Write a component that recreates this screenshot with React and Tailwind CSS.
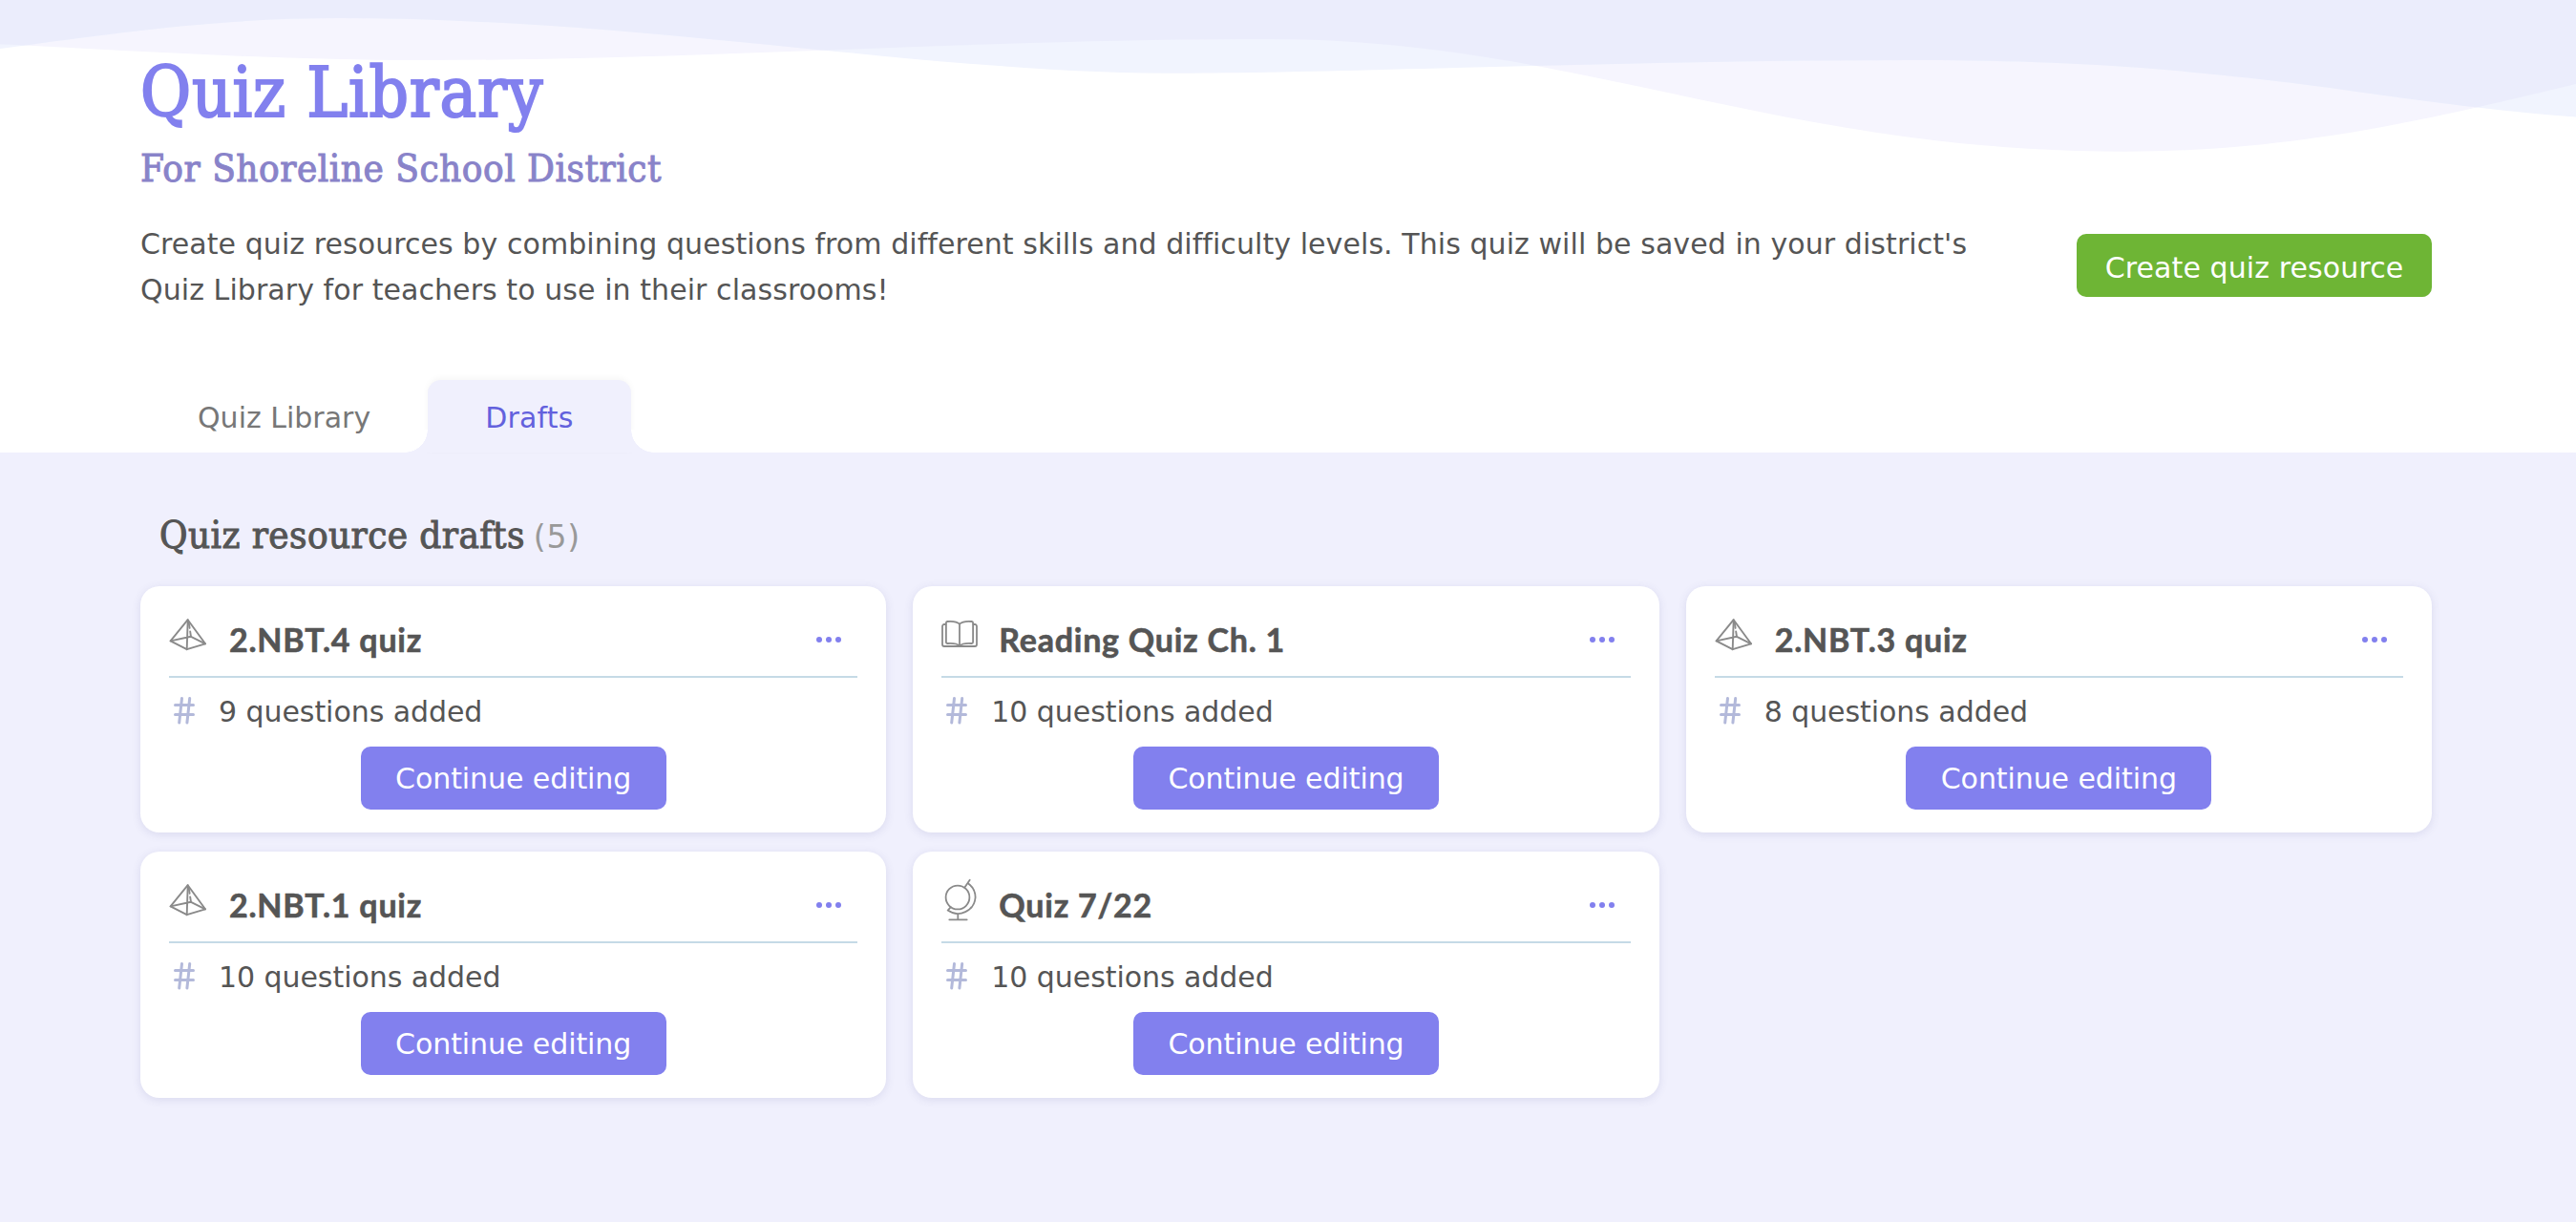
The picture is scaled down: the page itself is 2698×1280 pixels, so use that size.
import React from "react";

const DRAFTS = [
  { title: "2.NBT.4 quiz", subject: "math", questions: 9 },
  { title: "Reading Quiz Ch. 1", subject: "reading", questions: 10 },
  { title: "2.NBT.3 quiz", subject: "math", questions: 8 },
  { title: "2.NBT.1 quiz", subject: "math", questions: 10 },
  { title: "Quiz 7/22", subject: "social", questions: 10 },
];

const PyramidIcon = () => (
  <svg
    className="mt-[34px] h-[34px] w-10 shrink-0 stroke-[#8a8a8a] stroke-[1.9]"
    viewBox="0 0 40 34"
    fill="none"
    strokeLinecap="round"
    strokeLinejoin="round"
  >
    <path d="M19.7 1.2 1.6 23.4 18.7 32.2 38 26.3Z" />
    <path d="M19.7 1.2 18.7 32.2M1.6 23.4 23 18.8 38 26.3" />
    <path d="M20.7 4 23 18.8" strokeDasharray="6 3.5" />
  </svg>
);

const BookIcon = () => (
  <svg
    className="mt-[34px] h-8 w-[37px] shrink-0 overflow-visible stroke-[#8a8a8a] stroke-[1.8]"
    viewBox="0 0 37 32"
    fill="none"
    strokeLinecap="round"
    strokeLinejoin="round"
  >
    <path d="M4.5 6H3A2 2 0 0 0 1 8V27A2 2 0 0 0 3 29H35A2 2 0 0 0 37 27V8A2 2 0 0 0 35 6H33.5" />
    <path d="M19 5.6C16 2.8 11 2.6 6.2 3A1.4 1.4 0 0 0 4.9 4.4V24.6A1.4 1.4 0 0 0 6.3 26C11 25.7 16 25.5 19 28.6C22 25.5 27 25.7 31.7 26A1.4 1.4 0 0 0 33.1 24.6V4.4A1.4 1.4 0 0 0 31.8 3C27 2.6 22 2.8 19 5.6ZV29" />
  </svg>
);

const GlobeIcon = () => (
  <svg
    className="mt-[25px] h-12 w-[37px] shrink-0 overflow-visible stroke-[#8a8a8a] stroke-[1.8]"
    viewBox="0 0 37 48"
    fill="none"
    strokeLinecap="round"
    strokeLinejoin="round"
  >
    <circle cx="17" cy="23" r="12.4" />
    <path d="M24.4 12.6 29.7 4.7" />
    <path d="M27.8 8.2A18.4 18.4 0 0 1 35.6 23A18.4 18.4 0 0 1 6.7 36.6L9.8 33.2" />
    <path d="M17.3 41V46.3M8.3 46.3H26.7" />
  </svg>
);

const SUBJECT_ICONS = {
  math: PyramidIcon,
  reading: BookIcon,
  social: GlobeIcon,
};

const HashIcon = () => (
  <svg
    className="-mt-1 ml-[5px] h-[30px] w-6 shrink-0 stroke-[#b3b9da] stroke-3"
    viewBox="0 0 24 30"
    fill="none"
    strokeLinecap="round"
  >
    <path d="M1.5 9.5H20.5M1.5 19.5H20.5M8.5 2.5 5.7 28M16.7 2.5 13.9 28" />
  </svg>
);

const DotsIcon = () => (
  <svg className="h-2 w-[26px] fill-[#8280ee]" viewBox="0 0 26 8">
    <circle cx="3" cy="4" r="3" />
    <circle cx="13" cy="4" r="3" />
    <circle cx="23" cy="4" r="3" />
  </svg>
);

const LILAC_WAVE =
  "M0 46.3C150 54 300 63 440 63C740 63 1010 41 1330 41C1650 41 1856 158.7 2226 158.7C2406 158.7 2548 124 2698 88V0H0Z";
const BLUE_WAVE =
  "M0 51C130 33 235 19 355 19C675 19 970 76.7 1225 76.7C1405 76.7 1702 63 2002 63C2170 63 2300 73 2440 92C2530 104.5 2610 116 2698 122.5V0H0Z";

const Waves = () => (
  <svg className="absolute inset-x-0 top-0 h-40 w-full" viewBox="0 0 2698 160" preserveAspectRatio="none">
    <clipPath id="lilac-wave">
      <path d={LILAC_WAVE} />
    </clipPath>
    <path d={LILAC_WAVE} fill="#f6f5fe" />
    <path d={BLUE_WAVE} fill="#f1f4fe" />
    <path d={BLUE_WAVE} fill="#ebedfc" clipPath="url(#lilac-wave)" />
  </svg>
);

const Tabs = () => (
  <div className="mt-[70px] flex h-[76px] text-[30px] leading-9">
    <button className="flex pt-[22px] pr-[60px] pl-[60px] text-[#777777]">Quiz Library</button>
    <button className="relative flex rounded-t-[14px] bg-[#f0f0fd] pt-[22px] pr-[60px] pl-[60px] tracking-[0.2px] text-[#6361dd] shadow-[0_-2px_6px_rgba(0,0,0,0.04)]">
      <span className="absolute bottom-0 -left-6 size-6 bg-[radial-gradient(circle_at_0_0,#ffffff_23.5px,#f0f0fd_24px)]" />
      Drafts
      <span className="absolute -right-6 bottom-0 size-6 bg-[radial-gradient(circle_at_100%_0,#ffffff_23.5px,#f0f0fd_24px)]" />
    </button>
  </div>
);

const DraftCard = ({ title, subject, questions }) => {
  const Icon = SUBJECT_ICONS[subject];

  return (
    <div className="flex flex-col rounded-[20px] bg-white px-[30px] pb-6 shadow-[0_2px_10px_rgba(70,70,140,0.13)]">
      <div className="flex h-24 items-start border-b-2 border-[#c5dae6]">
        <Icon />
        <h3 className="mt-[35px] ml-[23px] font-[Lato,sans-serif] text-[34px] leading-[42px] font-bold tracking-[0.75px] [-webkit-text-stroke:0.6px_#555555]">
          {title}
        </h3>
        <button className="mt-[52px] mr-[17px] ml-auto">
          <DotsIcon />
        </button>
      </div>
      <div className="mt-[18px] flex h-9 items-center gap-[23px] text-[30px] leading-9 tracking-[-0.06px]">
        <HashIcon />
        <span>{questions} questions added</span>
      </div>
      <button className="mt-[18px] h-[66px] w-80 self-center rounded-[10px] bg-[#8280ee] pt-px text-[30px] tracking-[-0.08px] text-white">
        Continue editing
      </button>
    </div>
  );
};

const App = () => (
  <div className="min-h-screen bg-[#f0f0fd] font-['DejaVu_Sans',Verdana,sans-serif] text-[#555555]">
    <header className="relative h-[474px] bg-white">
      <Waves />
      <div className="relative pt-[55px] pr-[151px] pl-[147px]">
        <h1 className="font-['DejaVu_Serif_Condensed','DejaVu_Serif',serif] text-[72px] leading-[84px] tracking-[0.8px] text-[#8280ee] [-webkit-text-stroke:2px_#8280ee]">
          Quiz Library
        </h1>
        <h2 className="mt-[13px] font-['DejaVu_Serif_Condensed','DejaVu_Serif',serif] text-[40px] leading-[48px] tracking-[0.52px] text-[#8983c9] [-webkit-text-stroke:1px_#8983c9]">
          For Shoreline School District
        </h2>
        <div className="mt-8 flex items-start justify-between">
          <p className="w-[1940px] text-[30px] leading-[48px] tracking-[0.07px]">
            Create quiz resources by combining questions from different skills and difficulty levels. This quiz will be saved in your district's Quiz Library for teachers to use in their classrooms!
          </p>
          <button className="mt-[13px] h-[66px] w-[372px] rounded-[10px] bg-[#6eb535] pt-1 text-[30px] tracking-[0.1px] text-white">
            Create quiz resource
          </button>
        </div>
        <Tabs />
      </div>
    </header>

    <main className="px-[147px] pt-[62px]">
      <div className="flex h-12 items-baseline gap-[9px] pl-5">
        <h2 className="font-['DejaVu_Serif_Condensed','DejaVu_Serif',serif] text-[40px] leading-[48px] tracking-[0.42px] [-webkit-text-stroke:1px_#555555]">
          Quiz resource drafts
        </h2>
        <span className="text-[33px] tracking-[0.8px] text-[#999999]">(5)</span>
      </div>
      <div className="mt-[30px] grid w-[2400px] grid-cols-3 gap-x-7 gap-y-5">
        {DRAFTS.map((draft) => (
          <DraftCard key={draft.title} {...draft} />
        ))}
      </div>
    </main>
  </div>
);

export default App;
